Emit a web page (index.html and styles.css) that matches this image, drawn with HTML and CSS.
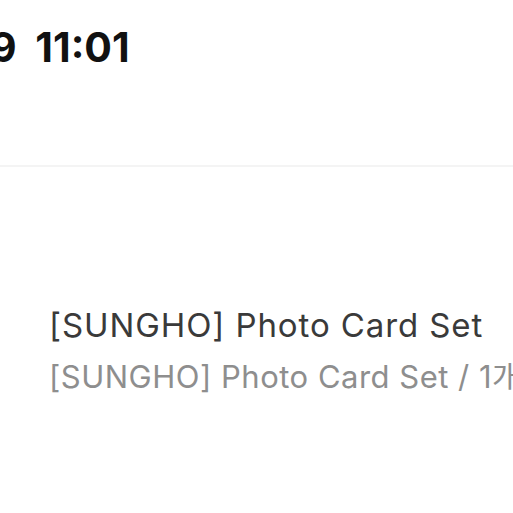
FILE: index.html
```html
<!DOCTYPE html>
<html lang="ko">
<head>
	<meta charset="utf-8" />
	<meta name="viewport" content="width=device-width, initial-scale=1" />
	<title>Order</title>
	<link rel="stylesheet" href="styles.css">
</head>
<body>

	<header class="order-head">
		<p class="order-date">2024.01.09 11:01</p>
	</header>

	<section class="order-item">
		<p class="item-name">[SUNGHO] Photo Card Set</p>
		<p class="item-option">[SUNGHO] Photo Card Set / 1개</p>
	</section>

</body>
</html>
```

FILE: styles.css
```css
* {
	box-sizing: border-box;
}

body {
	margin: 0;
	padding: 0;
	width: 513px;
	height: 513px;
	overflow: hidden;
	background: #FFFFFF;
	font-family: Inter, "Noto Sans CJK KR", sans-serif;
}

p {
	margin: 0;
}

.order-head {
	height: 167px;
	padding: 22px 0 0 0;
	border-bottom: 2px solid #F4F4F4;
	overflow: hidden;
}
.order-date {
	margin-left: -213px;
	font-size: 41px;
	font-weight: 700;
	line-height: 50px;
	word-spacing: 9px;
	color: #111111;
	white-space: nowrap;
}

.order-item {
	padding: 138px 0 0 49px;
	overflow: hidden;
}
.item-name,
.item-option {
	font-weight: 400;
	line-height: 40px;
	white-space: nowrap;
}
.item-name {
	font-size: 33px;
	letter-spacing: 0.9px;
	color: #3A3A3A;
}
.item-option {
	margin-top: 12px;
	font-size: 31px;
	letter-spacing: 0.5px;
	color: #8E8E8E;
}
```
